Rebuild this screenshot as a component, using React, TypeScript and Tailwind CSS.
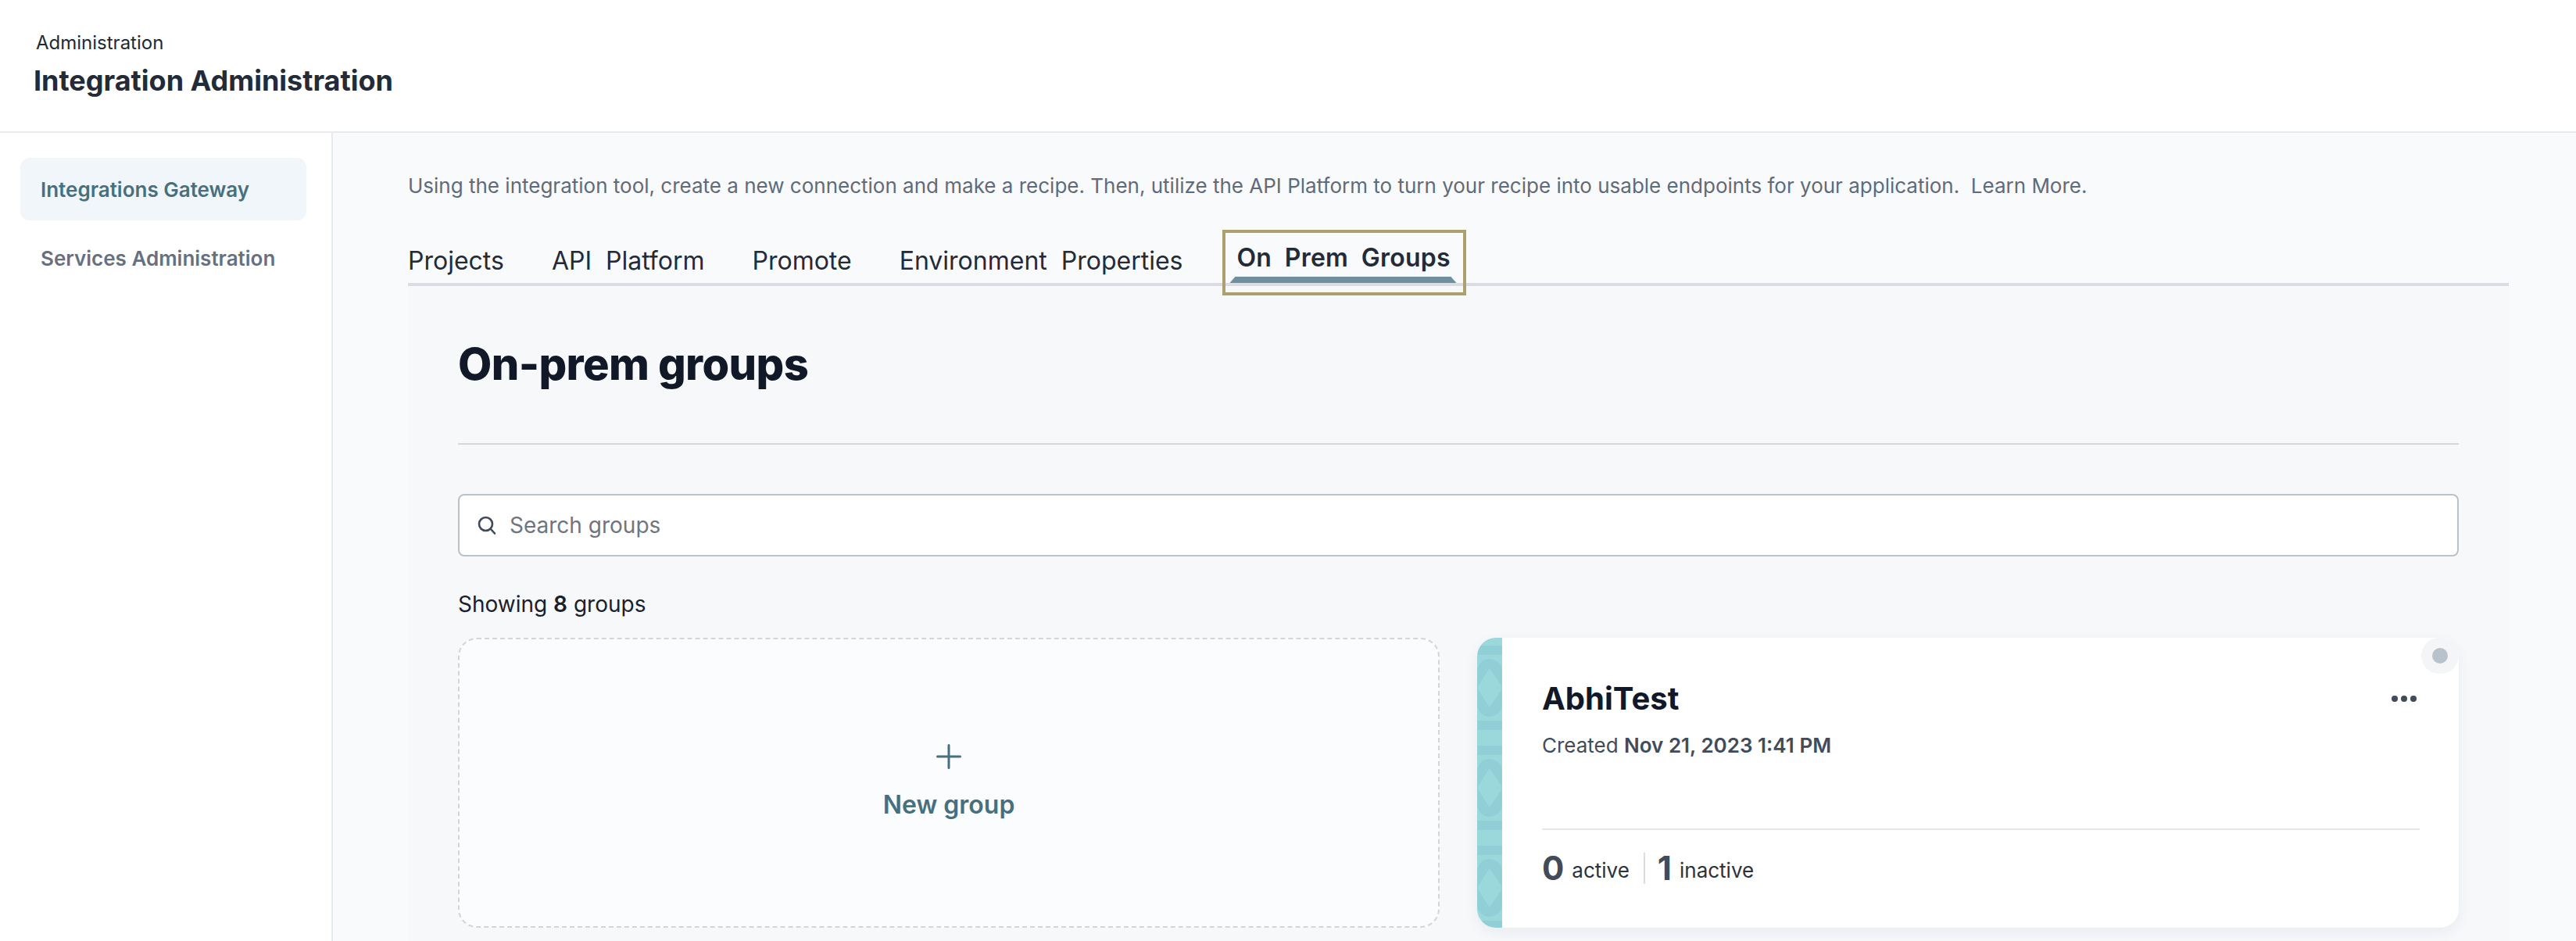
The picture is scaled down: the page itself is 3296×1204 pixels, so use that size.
const tabs = ['Projects', 'API  Platform', 'Promote', 'Environment  Properties'];

function BandStrip() {
  return (
    <svg className="w-[32px] h-full flex-none block" aria-hidden="true">
      <defs>
        <pattern id="strip" width="32" height="128" patternUnits="userSpaceOnUse">
          <rect width="32" height="128" fill="#9ad8db" />
          <rect y="10" width="32" height="12" fill="#90cfd5" />
          <rect y="106" width="32" height="12" fill="#90cfd5" />
          <rect x="0" y="27" width="32" height="74" rx="16" fill="#90cfd5" />
          <path d="M16 39 L30 60 Q32 64 30 68 L16 89 L2 68 Q0 64 2 60 Z" fill="#9ad8db" />
        </pattern>
      </defs>
      <rect width="32" height="100%" fill="url(#strip)" />
    </svg>
  );
}

export default function App() {
  return (
    <div className="w-[3296px] h-[1204px] overflow-hidden bg-white text-[#111827] font-['Inter',sans-serif]">
      <header className="h-[170px] border-b-2 border-[#e8eaed] pl-[43px] pt-[35px]">
        <div className="pl-[3px] text-[24px] leading-[40px] text-[#1f2937]">Administration</div>
        <h2 className="mt-[4px] text-[36px] leading-[48px] font-bold text-[#242b38]">Integration Administration</h2>
      </header>

      <div className="flex h-[1034px]">
        <aside className="w-[426px] flex-none border-r-2 border-[#e8eaed] px-[26px] pt-[32px]">
          <div className="w-[366px] h-[80px] rounded-[12px] bg-[#f1f6fa] pl-[26px] flex items-center text-[26px] font-semibold text-[#47707f]">
            Integrations Gateway
          </div>
          <div className="mt-[8px] h-[80px] pl-[26px] flex items-center text-[26px] font-semibold text-[#667080]">
            Services Administration
          </div>
        </aside>

        <main className="flex-1 bg-[#f9fafc] pl-[96px] pr-[86px] pt-[48px]">
          <p className="text-[26px] leading-[40px] text-[#5f6b7a] whitespace-pre">
            Using the integration tool, create a new connection and make a recipe. Then, utilize the API Platform to turn your recipe into usable endpoints for your application.  Learn More.
          </p>

          <div className="mt-[40px] h-[68px] flex items-start gap-[61px] border-b-4 border-[#d9dde3]">
            {tabs.map((t) => (
              <div key={t} className="pt-[16px] text-[32px] leading-[40px] text-[#242b38] whitespace-pre">{t}</div>
            ))}
            <div className="relative -ml-[6px] w-[304px] h-[76px] flex-none pt-[12px] pl-[14px] outline-4 outline-[#ae9f6e] text-[32px] leading-[40px] font-semibold tracking-[0.25px] text-[#242b38] whitespace-pre">
              On  Prem  Groups
              <div className="absolute left-[5px] right-[9px] top-[56px] h-[8px] bg-[#6e8f9e] [clip-path:polygon(7px_0,calc(100%-7px)_0,100%_100%,0_100%)]" />
            </div>
          </div>

          <section className="bg-[#f6f8fa] h-[900px] px-[64px] pt-[64px]">
            <h1 className="text-[56px] leading-[72px] font-extrabold tracking-[-0.6px] text-[#111827]">On-prem groups</h1>
            <div className="mt-[65px] h-[2px] bg-[#d4d7dc]" />

            <div className="mt-[63px] h-[80px] rounded-[8px] border-2 border-[#b9c1c9] bg-white flex items-center pl-[22px] gap-[16px]">
              <svg width="26" height="26" viewBox="0 0 26 26" fill="none" stroke="#3f4a5a" strokeWidth="2.6" strokeLinecap="round" aria-hidden="true">
                <circle cx="11.5" cy="11.5" r="8.5" />
                <path d="M18 18 L23 23.5" />
              </svg>
              <span className="text-[28px] text-[#70757d]">Search groups</span>
            </div>

            <div className="mt-[41px] text-[28px] leading-[40px] text-[#1a202c]">
              Showing <b className="font-semibold">8</b> groups
            </div>

            <div className="mt-[23px] grid grid-cols-2 gap-[48px] h-[371px]">
              <div className="rounded-[24px] border-2 border-dashed border-[#d2d6db] bg-[#fbfcfe] flex flex-col items-center pt-[134px]">
                <svg width="32" height="32" viewBox="0 0 32 32" fill="none" stroke="#47707f" strokeWidth="3" strokeLinecap="round" aria-hidden="true">
                  <path d="M16 1.5 V30.5 M1.5 16 H30.5" />
                </svg>
                <div className="mt-[26px] text-[32px] leading-[40px] font-semibold text-[#47707f]">New group</div>
              </div>

              <div className="relative rounded-[24px] overflow-hidden bg-white flex shadow-[0_6px_18px_rgba(30,50,80,0.06)]">
                <BandStrip />
                <div className="flex-1 pl-[51px] pr-[50px] pt-[54px]">
                  <div className="flex justify-between items-center">
                    <div className="text-[40px] leading-[48px] font-bold text-[#111827]">AbhiTest</div>
                    <div className="flex gap-[4px] mr-[4px]">
                      <span className="w-[8px] h-[8px] rounded-full bg-[#414b5a]" />
                      <span className="w-[8px] h-[8px] rounded-full bg-[#414b5a]" />
                      <span className="w-[8px] h-[8px] rounded-full bg-[#414b5a]" />
                    </div>
                  </div>
                  <div className="mt-[16px] text-[26px] leading-[40px] text-[#414b5a]">
                    Created <b className="font-semibold">Nov 21, 2023 1:41 PM</b>
                  </div>
                  <div className="mt-[86px] h-[2px] bg-[#e4e6e8]" />
                  <div className="mt-[29px] flex items-center h-[40px]">
                    <span className="text-[42px] leading-[40px] font-bold text-[#414b5a]">0</span>
                    <span className="ml-[10px] text-[26px] leading-[40px] mt-[6px] text-[#2a3240]">active</span>
                    <span className="ml-[18px] mr-[16px] w-[2px] h-[40px] bg-[#d9dcdf]" />
                    <span className="text-[42px] leading-[40px] font-bold text-[#414b5a]">1</span>
                    <span className="ml-[10px] text-[26px] leading-[40px] mt-[6px] text-[#2a3240]">inactive</span>
                  </div>
                </div>
                <div className="absolute right-0 top-0 w-[48px] h-[46px] rounded-full bg-[#f3f5f7] flex items-center justify-center">
                  <span className="w-[20px] h-[20px] rounded-full bg-[#b8c2cc]" />
                </div>
              </div>
            </div>
          </section>
        </main>
      </div>
    </div>
  );
}
